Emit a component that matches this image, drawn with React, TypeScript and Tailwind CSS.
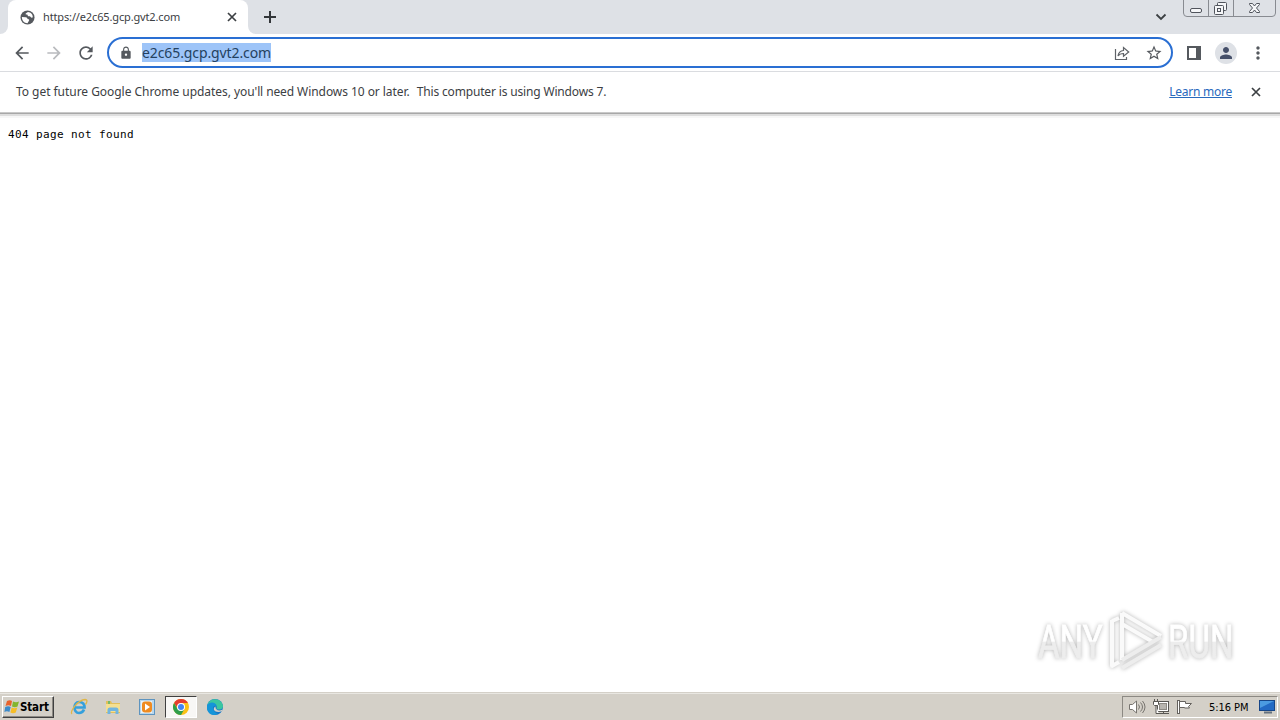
import type { ReactNode } from "react";
import {
  MdArrowBack,
  MdArrowForward,
  MdRefresh,
  MdLock,
  MdStarBorder,
  MdMoreVert,
  MdPerson,
} from "react-icons/md";

const Cross = ({ size, width = 2 }: { size: number; width?: number }) => (
  <svg width={size} height={size} viewBox="0 0 10 10" fill="none" stroke="#3c4043" strokeWidth={width}>
    <path d="M1 1l8 8M9 1l-8 8" />
  </svg>
);

function TabStrip() {
  return (
    <div className="flex h-[34px] bg-[#dee1e6]">
      <div className="w-2 bg-white">
        <div className="h-full rounded-br-lg bg-[#dee1e6]" />
      </div>
      <div className="flex w-60 items-center rounded-t-lg bg-white pl-3 pr-[11px]">
        <svg className="mr-2 shrink-0" width="15" height="15" viewBox="0 0 16 16">
          <circle cx="8" cy="8" r="7.5" fill="#55595e" />
          <path d="M2 7.400l4 .2c1.700.1 2.100 1 2 2.100l1.200.2c.8.3.7 1.200.2 1.900L8 14C4.700 14.100 1.900 11.200 2 7.400zM8.500 2c-.8.7-1.800 1-2.400 1.600-.5.8.3 1.300 1.400 1.100.9 0 .7 1.200.9 1.800.8.6 2-.1 2.700.6.7.9 1.700 1.500 2.500.7C14 4.700 11.500 2.200 8.500 2z" fill="#fff" />
        </svg>
        <span className="flex-1 whitespace-nowrap text-[11px] leading-4 tracking-[-0.14px] text-[#3c4043]">https://e2c65.gcp.gvt2.com</span>
        <Cross size={10} width={1.7} />
      </div>
      <div className="w-2 bg-white">
        <div className="h-full rounded-bl-lg bg-[#dee1e6]" />
      </div>
      <svg className="ml-2 mt-[11px]" width="12" height="12" viewBox="0 0 12 12" stroke="#33363a" strokeWidth="2">
        <path d="M6 0v12M0 6h12" />
      </svg>
      <svg className="ml-auto mr-4 mt-[13px]" width="12" height="8" viewBox="0 0 12 8" fill="none" stroke="#3c4043" strokeWidth="1.8">
        <path d="M1.500 1.500L6 6l4.500-4.500" />
      </svg>
      <svg className="mr-1" width="93" height="18" viewBox="0 0 93 18" fill="none" stroke="#888b91">
        <path d="M.5 0v13q0 3.500 3.500 3.500h85q3.500 0 3.500-3.500V0M25.500 0v16M50.500 0v16" />
        <g stroke="#50545c">
          <rect x="7.500" y="8.500" width="11" height="4" rx="1.500" fill="#f5f6f8" />
          <rect x="34.500" y="2.500" width="9" height="8" rx="1" fill="#f5f6f8" />
          <rect x="31.500" y="5.500" width="9" height="9" rx="1" fill="#f5f6f8" />
          <rect x="34.500" y="8.500" width="3" height="3" />
          <path d="M66.500 3.500h3l2 2.500 2-2.500h3v1l-3 3.500 3 3.500v1h-3l-2-2.500-2 2.500h-3v-1l3-3.500-3-3.500z" fill="#f5f6f8" />
        </g>
      </svg>
    </div>
  );
}

function Toolbar() {
  return (
    <div className="flex h-[38px] items-center border-b border-[#dadce0] bg-white pl-3 pr-3 text-[#55595e]">
      <MdArrowBack size={20} className="shrink-0" />
      <MdArrowForward size={20} className="ml-3 shrink-0 text-[#b9bbbe]" />
      <MdRefresh size={20} className="ml-3 shrink-0" />
      <div className="ml-[11px] flex h-[31px] w-[1066px] shrink-0 items-center rounded-full border-2 border-[#2a6fd3] pl-2.5 pr-2">
        <MdLock size={14} />
        <span className="ml-[9px] whitespace-nowrap bg-[#9dc4f8] text-[14px] leading-[19px] tracking-[-0.1px] text-[#24415f]">e2c65.gcp.gvt2.com</span>
        <svg className="ml-auto" width="16" height="16" viewBox="0 0 16 16" fill="none" stroke="#5f6368" strokeWidth="1.200">
          <path d="M1.500 4v10.500h11V12M4 11C4.500 7.500 6.500 5.800 9.500 5.500V2.500L14.700 7 9.500 11.200V8.500C7 8.500 5.200 9.300 4 11z" />
        </svg>
        <MdStarBorder size={18} className="ml-[15px]" />
      </div>
      <svg className="ml-[14px] shrink-0" width="14" height="14" viewBox="0 0 14 14">
        <rect x="1" y="1" width="12" height="12" fill="none" stroke="#55595e" strokeWidth="2" />
        <rect x="9" width="5" height="14" fill="#55595e" />
      </svg>
      <div className="ml-[14px] flex size-[22px] shrink-0 items-center justify-center rounded-full bg-[#dee1e6] text-[#46506a]">
        <MdPerson size={18} />
      </div>
      <MdMoreVert size={20} className="ml-[11px] shrink-0" />
    </div>
  );
}

function InfoBar() {
  return (
    <div className="flex h-10 items-center bg-white pl-4 pr-[19px] text-[12px] leading-4 text-[#3c4043]">
      <p className="whitespace-pre">
        <span className="tracking-[-0.04px]">To get future Google Chrome updates, </span>
        <span className="tracking-[-0.1px]">you'll need </span>
        <span className="mr-[4px] tracking-[-0.06px]">Windows 10 or later. </span>
        <span className="tracking-[-0.16px]">This computer is using Windows 7.</span>
      </p>
      <a className="ml-auto mr-[19px] tracking-[-0.25px] text-[#2869bd] underline">Learn more</a>
      <Cross size={10} width={1.7} />
    </div>
  );
}

function Watermark() {
  return (
    <div className="absolute left-[1030px] top-[604px]">
      <svg width="212" height="76" viewBox="0 0 212 76" fill="none" style={{ filter: "drop-shadow(0 0 2px #b4b4b4)" }}>
        <defs>
          <linearGradient id="fade" gradientUnits="userSpaceOnUse" x1="0" y1="-54" x2="0" y2="22">
            <stop offset=".49" stopColor="#fff" />
            <stop offset=".5" stopColor="#ededed" />
          </linearGradient>
        </defs>
        <g fontFamily="Roboto, sans-serif" fontSize="46" fill="url(#fade)" stroke="url(#fade)" strokeWidth=".8">
          <text transform="translate(8 54) scale(.72 1)">ANY</text>
          <text transform="translate(138 54) scale(.72 1)">RUN</text>
        </g>
        <g stroke="#fafafa" strokeWidth="4" strokeLinejoin="round">
          <path d="M92 9v47M92 9l39 23M92 20l31 18M82 16v46l7-4M89 14l-7 3" />
          <path d="M131 33L92 56M131 41L92 64" stroke="#ededed" />
        </g>
      </svg>
    </div>
  );
}

const Task = ({ children }: { children: ReactNode }) => (
  <div className="flex h-[22px] w-[34px] items-center justify-center">{children}</div>
);

function Taskbar() {
  return (
    <div className="flex h-[27px] items-center border-t border-[#e9e7e2] bg-[#d4d0c8] pl-[2px] text-black">
      <div className="mr-2 flex h-[22px] w-[52px] items-center border border-b-[#404040] border-l-white border-r-[#404040] border-t-white pl-px shadow-[inset_-1px_-1px_#8c8983]">
        <svg width="16" height="16" viewBox="0 0 16 16">
          <path d="M3 2q3-1.500 5 0L7 7Q4.500 5.500 1.500 7z" fill="#e8622b" />
          <path d="M9 2.500q3 1.500 6 0l-1.500 5Q11 9 8 7.500z" fill="#83b52f" />
          <path d="M1.200 8q3-1.500 5.500 0l-1.300 5q-2.500-1.500-5 0z" fill="#3c8ac9" />
          <path d="M7.700 8.500q2.800 1.500 5.600 0l-1.500 5q-2.800 1.500-5.400 0z" fill="#f6bd27" />
        </svg>
        <span className="pt-0.5 font-['DejaVu_Sans_Condensed','DejaVu_Sans',sans-serif] text-[11.5px] font-bold tracking-[-0.15px]">Start</span>
      </div>
      <Task>
        <svg width="18" height="18" viewBox="0 0 18 18" fill="none">
          <path d="M14 11.500c-1 2.300-2.500 3.500-5 3.500-6 0-6-11 0-11 4 0 5.500 2.500 5.500 5.500H5" stroke="#35a0dc" strokeWidth="2.700" />
          <path d="M2 16C-1 14 8 2 15 1.500c3 0 2 3 .5 5" stroke="#e0b646" strokeWidth="1.300" />
        </svg>
      </Task>
      <Task>
        <svg width="18" height="18" viewBox="0 0 18 18">
          <path d="M2 3h5l1 2h8v10H2z" fill="#e3bf5b" />
          <path d="M4 3h2v3h6v3H4z" fill="#76b969" />
          <path d="M2 6h14v8H2z" fill="#f5df91" />
          <path d="M3.500 16v-4q0-2.500 2.500-2.500h6q2.500 0 2.500 2.500v4h-3v-3h-5v3z" fill="#72b5df" />
        </svg>
      </Task>
      <Task>
        <svg width="16" height="16" viewBox="0 0 16 16">
          <rect x=".5" y=".5" width="15" height="15" fill="#b8d7ed" stroke="#5e94bf" />
          <rect x="2" y="2" width="11" height="12" fill="#e9f3f9" />
          <rect x="3" y="2.500" width="10" height="11" rx="3" fill="#ef8b20" />
          <path d="M6 4.500v7l5-3.500z" fill="#fff" />
        </svg>
      </Task>
      <div className="mx-px flex h-[22px] w-8 items-center justify-center border border-b-white border-l-[#404040] border-r-white border-t-[#404040] bg-[#f8f7f5]">
        <svg width="16" height="16" viewBox="0 0 16 16">
          <circle cx="8" cy="8" r="8" fill="#fbc116" />
          <path d="M1.070 4A8 8 0 0 1 14.930 4H8L5 9.500z" fill="#e53d30" />
          <path d="M1.070 4A8 8 0 0 0 8 16l3.500-6H4.540z" fill="#2f9e4b" />
          <circle cx="8" cy="8" r="4" fill="#fff" />
          <circle cx="8" cy="8" r="3" fill="#4285f4" />
        </svg>
      </div>
      <Task>
        <svg width="16" height="16" viewBox="0 0 16 16">
          <circle cx="8" cy="8" r="8" fill="#1678c8" />
          <path d="M.5 6C2-1.500 14-2 16 6.500c.3 3-2 4.500-5 4-2.500-.4-1-1.500-1.300-3C9 4 3 3 .5 6z" fill="#3bc6a0" />
          <path d="M0 7c2-5 9-4 9.700 0C5 5 4 12 11 15 4 18-1 13 0 7z" fill="#1595d8" />
          <path d="M8.500 7.500C8 11 12 12.500 15.500 10.500L15 12c-3 1.800-7 1-8-1-.6-1.500.2-3 1.500-3.500z" fill="#d4d0c8" />
        </svg>
      </Task>
      <div className="ml-auto mr-[2px] flex h-[22px] w-[156px] items-center border border-b-white border-l-[#8c8983] border-r-white border-t-[#8c8983] pl-[5px]">
        <svg width="18" height="16" viewBox="0 0 18 16" fill="none" stroke="#77746f">
          <path d="M1.500 5.500h3L8.500 2v12l-4-3.500h-3z" fill="#fff" />
          <path d="M10.500 5.500q2 2.500 0 5M12.500 3.500q4 4.500 0 9M14.500 2q5 6 0 12" />
        </svg>
        <svg className="ml-[7px]" width="17" height="16" viewBox="0 0 17 16" fill="none" stroke="#595753">
          <rect x="4.500" y="2.500" width="11" height="10" fill="#fff" />
          <rect x="6.500" y="4.500" width="7" height="6" fill="#b8b5af" stroke="#8c8983" />
          <path d="M6 14.500h10M10.500 13v1M1.500 0v2M4.500 0v2" />
          <path d="M.5 2.500h5v3l-1 1h-3l-1-1zM3 7v7.500h3" fill="#fff" />
        </svg>
        <svg className="ml-[6px]" width="17" height="16" viewBox="0 0 17 16" fill="none" stroke="#65625e">
          <rect x="1.500" y="1.500" width="2" height="13" fill="#fff" />
          <path d="M3.500 2.500h6v2h6l-3 3 1 1.500h-5V8.500h-5z" fill="#fff" />
        </svg>
        <span className="ml-4 whitespace-nowrap pt-0.5 font-['DejaVu_Sans_Condensed','DejaVu_Sans',sans-serif] text-[11px] tracking-[-0.05px]">5:16 PM</span>
        <svg className="ml-auto mr-px shrink-0" width="17" height="14" viewBox="0 0 17 14">
          <rect x=".5" y=".5" width="15" height="10" fill="#236ac4" stroke="#174688" />
          <path d="M1 1h14L1 8z" fill="#4b9be1" />
          <path d="M5 12.500h8" stroke="#65717e" strokeWidth="2" />
        </svg>
      </div>
    </div>
  );
}

export default function App() {
  return (
    <div className="relative flex h-[720px] w-[1280px] flex-col overflow-hidden bg-white font-['Noto_Sans',sans-serif]">
      <TabStrip />
      <Toolbar />
      <InfoBar />
      <div className="h-[6px] bg-[linear-gradient(#c9c9c9_0_1px,#a8a8a8_1px_2px,#dedede_2px_4px,#f7f7f7_4px_6px)]" />
      <main className="flex-1 border-b border-[#d4d0c8] bg-white pl-2 pt-2.5">
        <pre className="font-['DejaVu_Sans_Mono',monospace] text-[11px] leading-[14px] tracking-[0.38px] text-black">404 page not found</pre>
      </main>
      <Taskbar />
      <Watermark />
    </div>
  );
}
